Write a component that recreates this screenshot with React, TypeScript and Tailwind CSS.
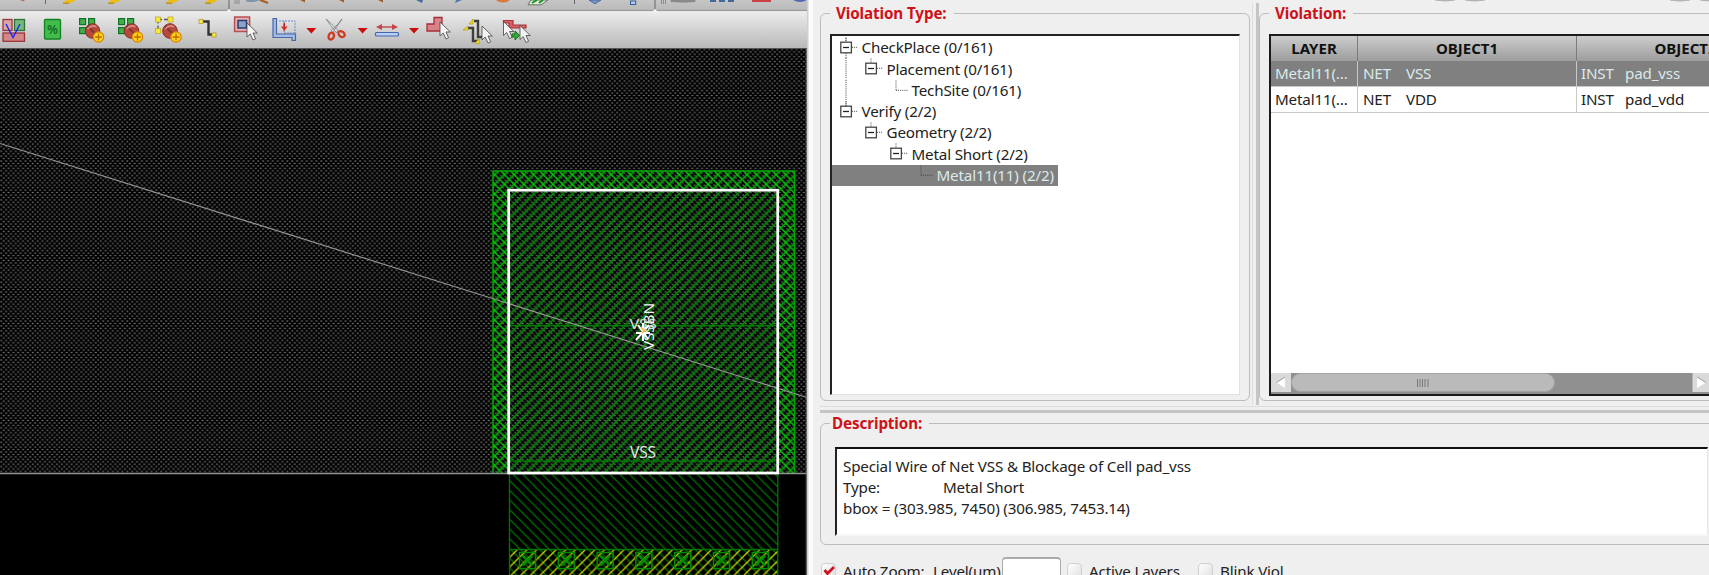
import React from 'react';

const Cursor = ({ x, y }: { x: number; y: number }) => (
  <path transform={`translate(${x} ${y})`} d="M0 0V14L3.2 11L6 17L8.6 15.8L6 10H10.3Z" fill="#f4f4f4" stroke="#444" strokeWidth="0.8" />
);

const Icon = ({ x, w, children }: { x: number; w: number; children?: React.ReactNode }) => (
  <svg className="block shrink-0" width={w} height="36" viewBox={`${x} 12 ${w} 36`}>{children}</svg>
);

const Greens = ({ x, n }: { x: number; n: number }) => (
  <g fill="#43ad4b" stroke="#0e7327" strokeWidth="1.2">
    <rect x={x} y="18.6" width="6" height="6" />
    <rect x={x + 9} y="18.6" width="6" height="6" />
    <rect x={x} y="27.6" width="6" height="6" />
    {n > 3 && <rect x={x + 9} y="27.6" width="6" height="6" />}
  </g>
);

const NoEntryPlus = ({ x }: { x: number }) => (
  <g>
    <circle cx={x} cy="31" r="7.3" fill="#b6483c" stroke="#803027" />
    <path d={`M${x - 5} 26L${x + 5} 36`} stroke="#7d352e" strokeWidth="1.8" />
    <path d={`M${x - 5} 29Q${x} 24 ${x + 4} 27`} fill="none" stroke="#d98d83" strokeWidth="1.5" />
    <circle cx={x + 6} cy="37" r="5.2" fill="#ffd51c" stroke="#d98200" strokeWidth="1.2" />
    <path d={`M${x + 2.6} 37H${x + 9.4}M${x + 6} 33.6V40.4`} stroke="#c06a00" strokeWidth="1.3" />
  </g>
);

const Drop = ({ x }: { x: number }) => <path d={`M${x - 5} 28H${x + 5}L${x} 33.5Z`} fill="#c90d0d" />;

function UpperToolbar() {
  return (
    <svg className="block h-3 w-[807px] shrink-0" viewBox="0 0 807 12">
      <defs>
        <linearGradient id="upper" x1="0" y1="0" x2="0" y2="1">
          <stop offset="0" stopColor="#c6c6c6" /><stop offset="1" stopColor="#b7b7b7" />
        </linearGradient>
      </defs>
      <rect width="807" height="12" fill="url(#upper)" />
      <path d="M0 10.4H807" stroke="#969696" />
      <path d="M0 11.6H807" stroke="#ededed" />
      <path d="M20 0H25L23 1.5Z" fill="#a67863" />
      {[63, 108, 166, 205].map((x) => (
        <g key={x}><path d={`M${x + 3} 0H${x + 13}L${x + 7} 3.2H${x}Z`} fill="#eebd13" /><path d={`M${x} 3.2H${x + 6}`} stroke="#a68018" /></g>
      ))}
      {[45.5, 574.5].map((x) => <path key={x} d={`M${x} 0V4`} stroke="#666" />)}
      {[229, 655].map((x) => <g key={x}><path d={`M${x} 0V9`} stroke="#7f7f7f" strokeWidth="1.4" /><path d={`M${x - 3} 12L${x} 9L${x + 3} 12Z`} fill="#f5f5f5" /></g>)}
      {[235, 237, 239, 661.5, 663.5, 665.5].map((x) => <path key={x} d={`M${x} 0V4`} stroke="#858585" strokeWidth=".9" />)}
      <path d="M246 0H260Q254 3 246 1.5Z" fill="#8295a9" />
      <path d="M260 0L268 3" stroke="#a86224" strokeWidth="2.4" />
      {[302, 341, 380].map((x) => <path key={x} d={`M${x - 2} 0L${x + 3} 2.4V0Z`} fill="#a15b21" />)}
      <path d="M416 0L422 3L423 0Z" fill="#456b9f" /><path d="M456 0L455 3L462 0Z" fill="#5278ae" />
      <ellipse cx="503" cy="-1" rx="7" ry="3.4" fill="#dc7940" />
      <path d="M531 0L528 4.8H541L548 0Z" fill="#e7efe3" stroke="#627462" />
      <path d="M532 3L537 0M539 3L543 0" stroke="#16961f" strokeWidth="2" />
      <path d="M589 0L595 3.8L601 0Z" fill="#7699ca" stroke="#48699b" />
      <rect x="630.5" y="1" width="5.2" height="3.5" fill="#b5cae7" stroke="#315f97" />
      <path d="M671 0V1.6Q683 3 695 1.6V0Z" fill="#909090" stroke="#787878" strokeWidth=".6" />
      {[710, 719, 728].map((x) => <rect key={x} x={x} width="6" height="2" fill="#426a98" />)}
      <path d="M752 0H771V2H752Z" fill="#ca4143" /><ellipse cx="800" cy="-1" rx="7" ry="3" fill="#5369b2" />
    </svg>
  );
}

function Toolbar() {
  return (
    <div className="flex h-9 w-[807px] shrink-0 bg-linear-to-b from-[#ececec] to-[#b9b9b9]">
      <Icon x={0} w={34}>
        <rect x="3" y="19.5" width="9" height="11" fill="#dba5a5" stroke="#9d343b" strokeWidth="1.3" />
        <rect x="14.5" y="19.5" width="10" height="11" fill="#75b77c" stroke="#2e7439" strokeWidth="1.3" />
        <rect x="3" y="33" width="21.5" height="8.3" fill="#d48787" stroke="#9d343b" strokeWidth="1.3" />
        <path d="M6 24L13 37.5L20 24" fill="none" stroke="#1720ff" strokeWidth="1.3" />
      </Icon>
      <Icon x={34} w={36}>
        <rect x="44.5" y="19.5" width="16" height="19.5" rx="1" fill="#42bd4b" stroke="#118224" strokeWidth="1.3" />
        <text x="52.5" y="33.8" textAnchor="middle" fontSize="12.5" fontWeight="600" fill="#126c20" fontFamily="Noto Sans, sans-serif">%</text>
      </Icon>
      <Icon x={70} w={40}><Greens x={79.6} n={3} /><NoEntryPlus x={92.5} /></Icon>
      <Icon x={110} w={40}><Greens x={118.6} n={4} /><NoEntryPlus x={131.5} /></Icon>
      <Icon x={150} w={40}>
        <path d="M158 19.5H171M158 19.5V31" stroke="#555" strokeWidth="1.3" strokeDasharray="4 2" />
        {[[155.5, 17], [168, 17], [155.5, 28.5]].map(([x, y]) => <rect key={`${x}-${y}`} x={x} y={y} width="5" height="5" fill="#f5e93a" stroke="#b9a326" strokeWidth=".7" />)}
        <NoEntryPlus x={170} />
      </Icon>
      <Icon x={190} w={36}>
        <path d="M203 21.5H208.5V34.5H213" fill="none" stroke="#333" strokeWidth="2.4" />
        <rect x="199" y="19.5" width="4" height="4" fill="#ffeb3c" stroke="#a79128" strokeWidth=".7" />
        <rect x="212" y="33" width="4" height="4" fill="#ffeb3c" stroke="#a79128" strokeWidth=".7" />
      </Icon>
      <Icon x={226} w={40}>
        <rect x="234.6" y="17" width="15" height="14.5" fill="#e5b1b1" stroke="#b54f56" strokeWidth="1.5" />
        <rect x="238" y="20.5" width="8.5" height="7.5" fill="#8ba2cb" stroke="#263d73" strokeWidth="1.5" />
        <Cursor x={247} y={23} />
      </Icon>
      <Icon x={266} w={54}>
        <path d="M279 21H295V34M284 21V33H295" fill="none" stroke="#6988c7" strokeDasharray="2 1" />
        <path d="M273 18.5H276.5V34H295.5V40.5H292V37.5H273Z" fill="#a5bae6" stroke="#4768a8" strokeWidth="1.2" />
        <path d="M284.3 23V27" stroke="#b71d22" strokeWidth="1.5" /><path d="M281 26.5H287.6L284.3 31Z" fill="#d62c2c" />
        <Drop x={311.3} />
      </Icon>
      <Icon x={320} w={50}>
        <path d="M326 19L336.5 33L337.5 30Q331 23 326 19M342 19L332.5 33L331.5 30Q338 25 342 19" fill="#f5f5f5" stroke="#777" strokeWidth=".8" />
        <ellipse cx="331.3" cy="36" rx="2.6" ry="3.5" transform="rotate(20 331 36)" fill="none" stroke="#cf3b24" strokeWidth="2.3" />
        <ellipse cx="341.3" cy="34.5" rx="2.5" ry="3.5" transform="rotate(-50 341 34)" fill="none" stroke="#cf3b24" strokeWidth="2.3" />
        <Drop x={362.6} />
      </Icon>
      <Icon x={370} w={54}>
        <path d="M378 27H396" stroke="#c2454a" strokeWidth="1.4" /><path d="M382 24L376 27L382 30ZM392 24L398 27L392 30Z" fill="#c2454a" />
        <rect x="375.5" y="32.5" width="23" height="3.5" rx="1" fill="#bbcff2" stroke="#4168ad" strokeWidth="1.2" /><Drop x={414} />
      </Icon>
      <Icon x={424} w={36}><path d="M434 17.5H442V31H427V24H434Z" fill="#d88388" stroke="#a52f38" strokeWidth="1.3" /><Cursor x={440} y={22} /></Icon>
      <Icon x={460} w={38}>
        <path d="M474 21H478V37H483M468 28H473V41H479" fill="none" stroke="#3e3e3e" strokeWidth="2.4" />
        <path d="M473 19V24H469ZM468 26V30H463ZM475 43L479 39L479 44Z" fill="#f3df21" stroke="#b19b12" strokeWidth=".7" /><Cursor x={482} y={26} />
      </Icon>
      <Icon x={498} w={40}>
        <path d="M503.5 20.5H513V25H526V28H509V23H503.5Z" fill="#da5f65" stroke="#aa323a" strokeWidth="1.2" />
        <Cursor x={503.5} y={21.5} /><Cursor x={520} y={25.5} />
        <path d="M512 34H515V31L519.5 35.5L515 40V37H512Z" fill="#36ac36" stroke="#126e1c" />
      </Icon>
    </div>
  );
}

function LayoutCanvas() {
  return (
    <svg className="block h-[527px] w-[807px] shrink-0 border-t border-[#555] bg-black" viewBox="0 49 807 526" fontFamily="Noto Sans, sans-serif">
      <defs>
        <pattern id="dots" width="4.85" height="4.85" patternUnits="userSpaceOnUse">
          <rect x=".3" y=".4" width="1.9" height="1.2" fill="#787878" /><rect x="2.7" y="2.8" width="1.9" height="1.2" fill="#787878" />
        </pattern>
        <pattern id="fwd" width="9.7" height="9.7" patternUnits="userSpaceOnUse"><path d="M-2 11.7L11.7 -2M-2 2L2 -2M7.7 11.7L11.7 7.7" stroke="#00a000" strokeWidth="1.45" /></pattern>
        <pattern id="bright" width="9.7" height="9.7" patternUnits="userSpaceOnUse"><path d="M-2 11.7L11.7 -2M-2 2L2 -2M7.7 11.7L11.7 7.7M-2 -2L11.7 11.7M7.7 -2L11.7 2M-2 7.7L2 11.7" stroke="#00d000" strokeWidth="1.3" /></pattern>
        <pattern id="back" width="9.7" height="9.7" patternUnits="userSpaceOnUse"><path d="M-2 -2L11.7 11.7M7.7 -2L11.7 2M-2 7.7L2 11.7" stroke="#007000" strokeWidth="1.3" /></pattern>
        <pattern id="yellow" width="9.7" height="9.7" patternUnits="userSpaceOnUse"><path d="M-2 11.7L11.7 -2M-2 2L2 -2M7.7 11.7L11.7 7.7" stroke="#d2d205" strokeWidth="1.35" /></pattern>
      </defs>
      <rect y="49" width="807" height="424" fill="url(#dots)" />
      <rect x="493" y="171" width="301.5" height="302" fill="url(#bright)" />
      <path d="M493 473V171H794.5V473" fill="none" stroke="#00a900" strokeWidth="1.5" />
      <rect x="508" y="190" width="270" height="283" fill="black" />
      <rect x="508" y="190" width="270" height="283" fill="url(#dots)" />
      <rect x="508" y="190" width="270" height="283" fill="url(#back)" opacity=".4" />
      <rect x="508" y="190" width="270" height="283" fill="url(#fwd)" />
      <path d="M509 325.5H778M509 461H778" stroke="#007b00" strokeWidth="1.3" />
      <path d="M0 473.5H807" stroke="#929292" strokeWidth="1.3" />
      <path d="M0 143.5L807 397.5" stroke="#999" strokeWidth="1.1" />
      <rect x="509" y="474" width="269" height="75" fill="url(#back)" />
      <rect x="509" y="549" width="269" height="26" fill="url(#back)" />
      <rect x="509" y="549" width="269" height="26" fill="url(#yellow)" />
      <path d="M509.5 474V575M777.8 474V575M509 549.5H778" stroke="#007500" strokeWidth="1.3" />
      {[0, 1, 2, 3, 4, 5, 6].map((i) => (
        <g key={i} transform={`translate(${519.5 + i * 38.8} 552.5)`} fill="none" stroke="#008c00">
          <rect width="16" height="16" strokeWidth="1.5" /><path d="M3 3L13 13M13 3L3 13" strokeWidth="2.5" />
        </g>
      ))}
      <rect x="508.7" y="190.2" width="269" height="282.8" fill="none" stroke="white" strokeWidth="2.7" />
      <text x="643" y="458.3" textAnchor="middle" fontSize="15.5" fill="#e5e5e5" textLength="26" lengthAdjust="spacingAndGlyphs">VSS</text>
      <text x="643" y="594" textAnchor="middle" fontSize="15.5" fill="#e5e5e5" textLength="26" lengthAdjust="spacingAndGlyphs">VSS</text>
      <text transform="translate(653.5 350) rotate(-90)" fontSize="15" fill="#f4f4f4" textLength="47" lengthAdjust="spacingAndGlyphs">VSSBN</text>
      <text x="629.5" y="329" fontSize="15" fill="#ddd" textLength="27" lengthAdjust="spacingAndGlyphs">VSS</text>
      <path d="M638 325L648 339M649 325L636 340M643 323V341M636 333H650" stroke="white" strokeWidth="2" />
      <path d="M641 327L644 331M646 329L642 333" stroke="#ffb22a" strokeWidth="1.3" />
      <path d="M806.3 49V575" stroke="#777" />
    </svg>
  );
}

type Row = { level: number; text: string; leaf?: boolean; selected?: boolean };
const tree: Row[] = [
  { level: 0, text: 'CheckPlace (0/161)' },
  { level: 1, text: 'Placement (0/161)' },
  { level: 2, text: 'TechSite (0/161)', leaf: true },
  { level: 0, text: 'Verify (2/2)' },
  { level: 1, text: 'Geometry (2/2)' },
  { level: 2, text: 'Metal Short (2/2)' },
  { level: 3, text: 'Metal11(11) (2/2)', leaf: true, selected: true },
];

function TreeRow({ row, index }: { row: Row; index: number }) {
  const x = 14 + row.level * 25;
  return (
    <div className={`flex h-[21.3px] items-center whitespace-nowrap ${row.selected ? 'w-[226px] bg-[#808080] text-[#dbe9e9]' : ''}`}>
      <svg className="block h-[21.3px] shrink-0" width={x + 15.5} height="21.3" viewBox={`0 0 ${x + 15.5} 21.3`} fill="none" stroke="#444">
        {index < 3 && <path d={`M14 ${index ? 0 : 1}V21.3`} strokeDasharray="1 1.1" />}
        {index === 3 && <path d="M14 0V8" strokeDasharray="1 1.1" />}
        <path d={`M${x} 0.5V${row.leaf ? 10 : 5}M${row.leaf ? x : x + 6} 10.3H${x + 12}`} strokeDasharray="1 1.1" />
        {!row.leaf && <><rect x={x - 5.2} y="5.2" width="10.6" height="10.6" fill="white" strokeWidth="1.3" /><path d={`M${x - 3} 10.5H${x + 3}`} stroke="#222" strokeWidth="1.3" /></>}
      </svg>
      <span>{row.text}</span>
    </div>
  );
}

function Group({ title, className, titleClass, children }: { title: string; className: string; titleClass: string; children: React.ReactNode }) {
  return (
    <section className={`shrink-0 rounded-md border border-[#bcbcbc] ${className}`}>
      <h2 className={`-mt-[11px] h-[21px] w-fit bg-[#efefef] text-[15.2px] leading-[21px] font-bold tracking-[-0.1px] whitespace-nowrap text-[#cf1017] ${titleClass}`}>{title}</h2>
      {children}
    </section>
  );
}

function ViolationTable() {
  const head = 'flex items-center justify-center border-r border-[#7c7c7c] font-bold';
  return (
    <div className="mt-[10px] ml-[9px] flex h-[362px] w-[440px] flex-col overflow-hidden border-2 border-r-0 border-[#1b1b1b] bg-white">
      <div className="flex h-[25px] w-[524px] shrink-0 bg-linear-to-b from-[#cdcdcd] to-[#9d9d9d] text-[15px] tracking-normal text-[#111]">
        <div className={`w-[87px] ${head}`}>LAYER</div><div className={`w-[219px] ${head}`}>OBJECT1</div><div className={`w-[218px] ${head}`}>OBJECT2</div>
      </div>
      {[['VSS', 'pad_vss'], ['VDD', 'pad_vdd']].map(([net, inst], i) => (
        <div key={net} className={`flex h-[26px] w-[524px] shrink-0 items-center border-b border-[#c8c8c8] whitespace-nowrap ${i ? '' : 'bg-[#808080] text-[#dbe9e9]'}`}>
          <div className="flex h-full w-[87px] items-center border-r border-[#c8c8c8] pl-1">Metal11(...</div>
          <div className="flex h-full w-[219px] items-center border-r border-[#c8c8c8] pl-[5px]"><span className="w-[43px]">NET</span>{net}</div>
          <div className="flex h-full items-center pl-1"><span className="w-[44px]">INST</span>{inst}</div>
        </div>
      ))}
      <svg className="mt-auto block h-[21px] w-[438px] shrink-0" viewBox="1271 373 438 21">
        <rect x="1271" y="373" width="438" height="21" fill="#909090" />
        <rect x="1271" y="373" width="20" height="19" fill="#dadada" />
        <rect x="1291.5" y="373.5" width="263" height="18" rx="9" fill="#bababa" stroke="#a2a2a2" />
        {[1417.5, 1420, 1422.5, 1425, 1428].map((x) => <path key={x} d={`M${x} 379V387`} stroke="#777" />)}
        <path d="M1285 377L1276.5 382.5L1285 388Z" fill="#fff" /><path d="M1285 377L1276.5 382.5" stroke="#999" />
        <rect x="1692.5" y="373" width="17" height="19" fill="#dadada" /><path d="M1697 377L1706 382.5L1697 388Z" fill="#fff" /><path d="M1697 377L1706 382.5" stroke="#999" />
      </svg>
    </div>
  );
}

const Check = ({ checked }: { checked?: boolean }) => (
  <span className="block h-[17px] w-[15px] shrink-0 rounded-sm border border-[#d0d0d0] bg-linear-to-br from-white to-[#dedede]">
    {checked && <svg className="block" width="14" height="14" viewBox="0 0 14 14"><path d="M2.5 6L5.5 9.5L12 3" fill="none" stroke="#cc1520" strokeWidth="2.8" /></svg>}
  </span>
);

export default function App() {
  return (
    <main className="flex h-[575px] w-[1709px] overflow-hidden bg-[#efefef] font-['Noto_Sans','Open_Sans',sans-serif] text-[15.2px] tracking-[-0.17px] text-[#222]">
      <div className="flex w-[807px] shrink-0 flex-col overflow-hidden"><UpperToolbar /><Toolbar /><LayoutCanvas /></div>
      <div className="h-full w-1.5 shrink-0 border-r-4 border-l border-r-[#fcfcfc] border-l-[#cfcfcf] bg-[#e8e8e8]" />
      <div className="flex w-[896px] shrink-0 flex-col">
        <div className="flex h-[13px] shrink-0 items-start">
          <svg className="block" width="896" height="3" viewBox="813 0 896 3">{[1435, 1465, 1670, 1700].map((x) => <path key={x} d={`M${x} 0Q${x + 10} 2 ${x + 20} 0`} fill="#b8b8b8" stroke="#b0b0b0" />)}</svg>
        </div>
        <div className="flex h-[388px] shrink-0 pl-[7px]">
          <Group title="Violation Type:" className="h-[388px] w-[430px]" titleClass="ml-[9px] pr-[7px] pl-[6px]">
            <div className="mt-[10px] ml-[9px] h-[361px] w-[410px] border-t-2 border-r border-b border-l-2 border-t-[#222] border-r-[#e2e2e2] border-b-[#e2e2e2] border-l-[#222] bg-white pt-px">
              {tree.map((row, i) => <TreeRow key={row.text} row={row} index={i} />)}
            </div>
          </Group>
          <div className="-mt-[10px] ml-[2px] h-[402px] w-[7px] shrink-0 border-r-[3px] border-l border-r-[#c5c5c5] border-l-[#ddd]" />
          <Group title="Violation:" className="h-[388px] w-[470px]" titleClass="ml-[9px] pr-[7px] pl-[6px]"><ViolationTable /></Group>
        </div>
        <div className="mt-[5px] ml-[7px] h-[7px] shrink-0 border-t border-b-[3px] border-t-[#ddd] border-b-[#c5c5c5]" />
        <div className="mt-[10px] ml-[7px] flex shrink-0 overflow-visible">
          <Group title="Description:" className="h-[122px] w-[900px]" titleClass="ml-[9px] pr-[7px] pl-[2px]">
            <div className="mt-[13px] ml-[14px] h-[89px] w-[873px] border-t-2 border-r border-b-2 border-l-2 border-t-[#111] border-r-[#e7e7e7] border-b-[#f8f8f8] border-l-[#222] bg-white pt-[6.5px] pl-[6px] leading-[21.3px] whitespace-nowrap">
              <div>Special Wire of Net VSS &amp; Blockage of Cell pad_vss</div>
              <div className="flex"><span className="w-[100px]">Type:</span>Metal Short</div>
              <div>bbox = (303.985, 7450) (306.985, 7453.14)</div>
            </div>
          </Group>
        </div>
        <div className="mt-[12px] flex h-[30px] shrink-0 items-start overflow-hidden pl-2 whitespace-nowrap">
          <div className="flex w-[112px] items-center gap-[7px] pt-[3px]"><Check checked />Auto Zoom:</div>
          <div className="w-[69px] pt-[3px]">Level(um)</div>
          <div className="h-[28px] w-[59px] rounded border border-t-2 border-[#aaa] bg-white" />
          <div className="ml-[6px] flex w-[131px] items-center gap-[7px] pt-[3px]"><Check />Active Layers</div>
          <div className="flex items-center gap-[7px] pt-[3px]"><Check />Blink Viol</div>
        </div>
      </div>
    </main>
  );
}
